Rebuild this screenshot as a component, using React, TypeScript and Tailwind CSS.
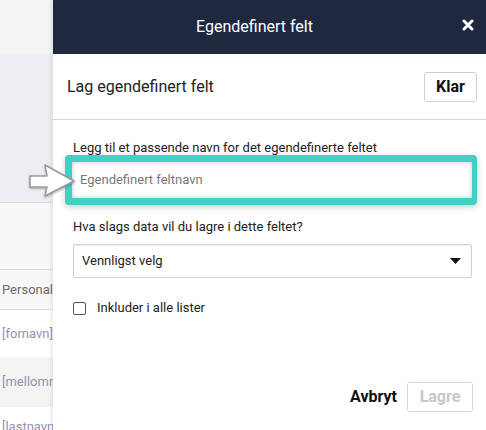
import React from 'react'

const font = { fontFamily: 'Roboto, "Liberation Sans", sans-serif' }

const LeftList = () => (
  <div className="w-[53px] shrink-0 overflow-hidden flex flex-col text-[13px] whitespace-nowrap">
    <div className="h-[54px] shrink-0 bg-[#f4f4f4]" />
    <div className="h-[149px] shrink-0 bg-[#eceef1] border-b border-[#dcdcdc]" />
    <div className="h-[67px] shrink-0 bg-[#f8f8f8] border-b border-[#dedede]" />
    <div className="h-[40px] shrink-0 bg-[#f8f8f8] border-b border-[#dedede] flex items-center pl-[2px] text-[#6b6b6b]">Personal</div>
    <div className="h-[47px] shrink-0 bg-white flex items-center pl-[2px] text-[#9a8fae]">[fornavn]</div>
    <div className="h-[50px] shrink-0 bg-[#f4f4f4] flex items-center pl-[2px] text-[#9a8fae]">[mellomnavn]</div>
    <div className="h-[30px] shrink-0 bg-white pt-[10px] pl-[2px] text-[#9a8fae]">[lastnavn]</div>
  </div>
)

const Arrow = () => (
  <svg className="absolute left-[28px] top-[162px]" width="50" height="38" viewBox="0 0 50 38">
    <defs>
      <filter id="sh" x="-20%" y="-20%" width="140%" height="140%">
        <feDropShadow dx="0" dy="1" stdDeviation="1.2" floodColor="#000" floodOpacity="0.35" />
      </filter>
    </defs>
    <path
      d="M2 14 L19 14 L17 3 L46 19 L17 34 L19 25 L2 25 Z"
      fill="#ffffff"
      stroke="#9a9a9a"
      strokeWidth="1.5"
      strokeLinejoin="round"
      filter="url(#sh)"
    />
  </svg>
)

export default function App() {
  return (
    <div className="relative w-[486px] h-[430px] flex overflow-hidden bg-white" style={font}>
      <LeftList />
      <div className="flex-1 flex flex-col bg-white shadow-[-2px_0_4px_rgba(0,0,0,0.08)]">
        <div className="h-[54px] shrink-0 bg-[#1e2940] flex items-center justify-center pr-[30px] relative">
          <span className="text-white text-[16px]">Egendefinert felt</span>
          <svg className="absolute right-[12px] top-[19px]" width="12" height="12" viewBox="0 0 12 12">
            <path d="M2 2 L10 10 M10 2 L2 10" stroke="#fff" strokeWidth="3" strokeLinecap="round" />
          </svg>
        </div>
        <div className="h-[66px] shrink-0 flex items-center justify-between pl-[14px] pr-[9px] border-b border-[#d6d6d6]">
          <span className="text-[16px] text-[#222]">Lag egendefinert felt</span>
          <button className="h-[30px] w-[53px] border border-[#cfcfcf] rounded-[3px] font-bold text-[16px] text-[#111] bg-white">
            Klar
          </button>
        </div>
        <div className="flex flex-col pl-[20px] pr-[14px]">
          <label className="mt-[20px] text-[13px] text-[#222] leading-[15px]">
            Legg til et passende navn for det egendefinerte feltet
          </label>
          <div className="ml-[-8px] mr-[-5px] p-[7px] pr-[5px] bg-[#43d0c4] rounded-[4px] shadow-[0_2px_6px_rgba(0,0,0,0.2)]">
            <div className="h-[36px] bg-white flex items-center px-[8px] shadow-[inset_0_0_4px_rgba(0,0,0,0.25)] text-[13px] text-[#777]">
              Egendefinert feltnavn
            </div>
          </div>
          <label className="mt-[14px] text-[13px] text-[#222] leading-[15px]">
            Hva slags data vil du lagre i dette feltet?
          </label>
          <div className="mt-[10px] h-[34px] border border-[#d0d0d0] rounded-[2px] flex items-center justify-between pl-[8px] pr-[10px] text-[13px] text-[#222] shadow-[inset_0_1px_2px_rgba(0,0,0,0.06)]">
            <span>Vennligst velg</span>
            <svg width="11" height="6" viewBox="0 0 11 6">
              <path d="M0 0 L11 0 L5.5 6 Z" fill="#111" />
            </svg>
          </div>
          <div className="mt-[22px] h-[16px] flex items-center gap-[11px]">
            <div className="w-[13px] h-[13px] border border-[#555] rounded-[2px] bg-white" />
            <span className="text-[13px] text-[#222]">Inkluder i alle lister</span>
          </div>
        </div>
        <div className="mt-auto mb-[18px] flex items-center justify-end gap-[10px] pr-[13px]">
          <span className="font-bold text-[16px] text-[#111]">Avbryt</span>
          <button className="h-[30px] w-[66px] border border-[#d6d6d6] rounded-[3px] font-bold text-[16px] text-[#c8c8c8] bg-white">
            Lagre
          </button>
        </div>
      </div>
      <Arrow />
    </div>
  )
}
